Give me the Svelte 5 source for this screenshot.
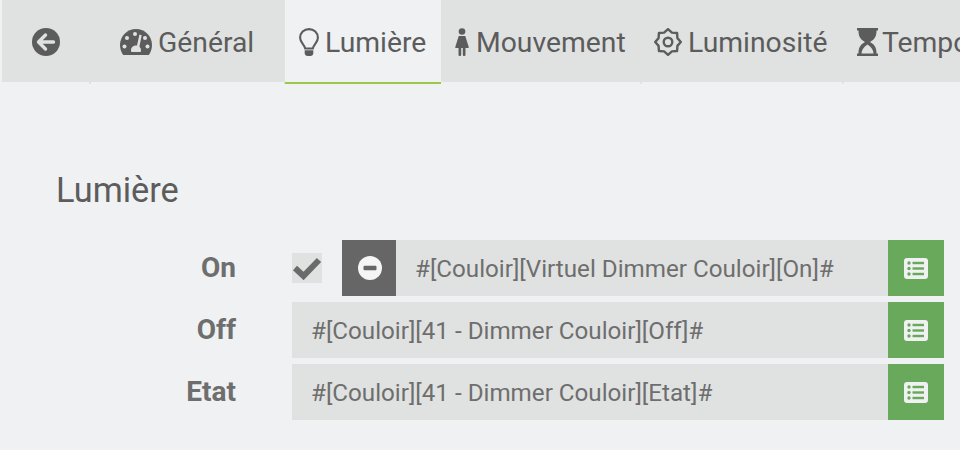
<script>
	const tabs = [
		{ id: "general", label: "Général", width: 195, pad: 30, gap: 6 },
		{ id: "light", label: "Lumière", width: 156, pad: 14, gap: 6, active: true },
		{ id: "move", label: "Mouvement", width: 200, pad: 14, gap: 7 },
		{ id: "lum", label: "Luminosité", width: 202, pad: 13, gap: 6 },
		{ id: "time", label: "Temporisation", width: 240, pad: 14, gap: 4 }
	];

	// eight pointed outline of the brightness icon
	const sunPoints = Array.from({ length: 16 }, (_, i) => {
		const r = i % 2 ? 10.2 : 12.8;
		const a = (i * Math.PI) / 8 - Math.PI / 2;
		return `${(14 + r * Math.cos(a)).toFixed(2)},${(14 + r * Math.sin(a)).toFixed(2)}`;
	}).join(" ");
</script>

{#snippet listIcon()}
	<svg class="list-icon" viewBox="0 0 24 21">
		<rect width="24" height="21" rx="3" fill="#f0f1f2" />
		<g fill="#68a95b">
			<circle cx="5" cy="5" r="1.7" />
			<circle cx="5" cy="10.5" r="1.7" />
			<circle cx="5" cy="16" r="1.7" />
			<rect x="8.5" y="3.8" width="11.5" height="2.4" />
			<rect x="8.5" y="9.3" width="11.5" height="2.4" />
			<rect x="8.5" y="14.8" width="11.5" height="2.4" />
		</g>
	</svg>
{/snippet}

{#snippet tabIcon(id)}
	{#if id === "general"}
		<svg class="ico gauge" viewBox="0 0 32 26">
			<path fill="#5c5c5c" d="M16 0C7 0 0 7.200 0 16c0 3.500 1 6.700 2.800 9.400.3.400.7.600 1.200.600h24c.5 0 .9-.2 1.200-.6C31 22.700 32 19.500 32 16 32 7.200 25 0 16 0z" />
			<g fill="#e0e2e1">
				<circle cx="15" cy="5" r="2" />
				<circle cx="7" cy="9" r="2" />
				<circle cx="4.500" cy="17.500" r="2" />
				<circle cx="27.500" cy="17.500" r="2" />
				<circle cx="25" cy="9" r="2" />
				<path d="M19.500 5.500l2.200.7-2.300 11.600c1 .8 1.600 2 1.600 3.400 0 .7-.2 1.300-.4 1.800h-9.200c-.3-.5-.4-1.100-.4-1.800 0-2.700 2.200-4.700 4.800-4.800h1.200z" />
			</g>
		</svg>
	{:else if id === "light"}
		<svg class="ico bulb" viewBox="0 0 20 29">
			<path fill="none" stroke="#5c5c5c" stroke-width="2.100" d="M6.200 20.500C5.500 16.800 1.100 14.500 1.100 9.700 1.100 4.900 5 1.100 10 1.100s8.900 3.800 8.900 8.600c0 4.800-4.400 7.100-5.100 10.800z" />
			<path fill="#5c5c5c" d="M5.700 22.300h8.600v2.900c0 1.400-1.200 2.800-3 2.800H8.700c-1.800 0-3-1.400-3-2.800z" />
		</svg>
	{:else if id === "move"}
		<svg class="ico female" viewBox="0 0 14 28">
			<circle cx="7" cy="3.500" r="3.300" fill="#5c5c5c" />
			<path fill="#5c5c5c" d="M3.700 8h6.600l3.500 11.300c.1.400-.2.700-.6.700H10.500v6.700c0 .7-.6 1.300-1.300 1.300-.8 0-1.400-.6-1.400-1.300V20H6.200v6.700c0 .7-.6 1.300-1.400 1.300-.7 0-1.300-.6-1.300-1.300V20H.8c-.4 0-.7-.3-.6-.7z" />
		</svg>
	{:else if id === "lum"}
		<svg class="ico sun" viewBox="0 0 28 28">
			<polygon fill="none" stroke="#5c5c5c" stroke-width="2.400" stroke-linejoin="round" points={sunPoints} />
			<circle cx="14" cy="14" r="4.300" fill="none" stroke="#5c5c5c" stroke-width="2.400" />
		</svg>
	{:else}
		<svg class="ico glass" viewBox="0 0 21 28">
			<path fill="#5c5c5c" d="M0 0h21v2.500h-1.500c0 5-1 8.500-6.500 11.500 5.500 3 6.500 6.500 6.500 11.500H21V28H0v-2.500h1.500c0-5 1-8.500 6.500-11.500C2.500 11 1.500 7.500 1.500 2.500H0z" />
			<path fill="#e0e2e1" d="M4.500 25.500c.2-3.500 2-6.500 6-9 4 2.500 5.800 5.500 6 9z" />
		</svg>
	{/if}
{/snippet}

<div class="page">
	<nav class="tabs">
		<a class="tab back" href="#back" aria-label="Retour">
			<svg class="ico arrow" viewBox="0 0 28 28">
				<circle cx="14" cy="14" r="14" fill="#5c5c5c" />
				<path fill="none" stroke="#e0e2e1" stroke-width="3.400" stroke-linecap="round" stroke-linejoin="round" d="M13.500 7l-7 7 7 7M7 14h14.500" />
			</svg>
		</a>
		{#each tabs as tab}
			<a class="tab" class:active={tab.active} style="width: {tab.width}px; padding-left: {tab.pad}px; gap: {tab.gap}px" href="#{tab.id}">
				{@render tabIcon(tab.id)}
				<span>{tab.label}</span>
			</a>
		{/each}
	</nav>

	<section class="content">
		<h2>Lumière</h2>
		<div class="rows">
			<div class="row">
				<span class="label">On</span>
				<div class="field">
					<span class="check">
						<svg viewBox="0 0 30 24"><path fill="none" stroke="#6b6b6b" stroke-width="6" d="M3 12l8.500 8L27 4" /></svg>
					</span>
					<span class="invert">
						<svg viewBox="0 0 24 24">
							<circle cx="12" cy="12" r="12" fill="#f5f5f5" />
							<rect x="5.500" y="9.800" width="13" height="4.400" rx="1" fill="#666" />
						</svg>
					</span>
					<span class="value">#[Couloir][Virtuel Dimmer Couloir][On]#</span>
					<span class="btn">{@render listIcon()}</span>
				</div>
			</div>
			<div class="row">
				<span class="label">Off</span>
				<div class="field">
					<span class="value">#[Couloir][41 - Dimmer Couloir][Off]#</span>
					<span class="btn">{@render listIcon()}</span>
				</div>
			</div>
			<div class="row">
				<span class="label">Etat</span>
				<div class="field">
					<span class="value">#[Couloir][41 - Dimmer Couloir][Etat]#</span>
					<span class="btn">{@render listIcon()}</span>
				</div>
			</div>
		</div>
	</section>
</div>

<style>
	:global(body) {
		margin: 0;
		background: #eff1f3;
		font-family: Roboto, "Liberation Sans", sans-serif;
	}

	.page {
		width: 960px;
		height: 450px;
		overflow: hidden;
	}

	.tabs {
		display: flex;
		height: 84px;
		padding-left: 2px;
	}

	.tab {
		position: relative;
		display: flex;
		flex: none;
		align-items: center;
		box-sizing: border-box;
		height: 82px;
		padding-top: 2px;
		background: #e0e2e1;
		color: #5c5c5c;
		font-size: 28.3px;
		text-decoration: none;
		white-space: nowrap;
	}

	.tab span {
		padding-top: 1px;
	}

	.tab::after {
		content: "";
		position: absolute;
		right: -1px;
		bottom: -2px;
		width: 2px;
		height: 2px;
		background: #e0e2e1;
	}

	.back {
		width: 88px;
		padding-left: 30px;
	}

	.active {
		height: 84px;
		background: #eff1f3;
		border-bottom: 2px solid #9bc84b;
	}

	.active::after {
		display: none;
	}

	.ico {
		flex: none;
	}

	.arrow {
		width: 28px;
		height: 28px;
	}

	.gauge {
		width: 32px;
		height: 26px;
	}

	.bulb {
		width: 20px;
		height: 29px;
	}

	.female {
		width: 14px;
		height: 28px;
	}

	.sun {
		width: 28px;
		height: 28px;
	}

	.glass {
		width: 21px;
		height: 28px;
	}

	.content {
		padding: 87px 16px 0 56px;
	}

	h2 {
		margin: 0 0 30px;
		color: #5c5c5c;
		font-size: 34.3px;
		font-weight: 400;
		line-height: 39px;
	}

	.rows {
		display: flex;
		flex-direction: column;
		gap: 6px;
	}

	.row {
		display: flex;
		height: 56px;
		align-items: stretch;
	}

	.label {
		width: 180px;
		margin-right: 56px;
		color: #6e6e6e;
		font-size: 28px;
		font-weight: 700;
		line-height: 56px;
		text-align: right;
	}

	.field {
		display: flex;
		flex: 1;
		align-items: stretch;
	}

	.check {
		display: flex;
		align-items: center;
		justify-content: center;
		align-self: center;
		width: 30px;
		height: 30px;
		margin-right: 20px;
		background: #e0e2e1;
	}

	.check svg {
		width: 30px;
		height: 24px;
	}

	.invert {
		display: flex;
		align-items: center;
		justify-content: center;
		box-sizing: border-box;
		width: 54px;
		padding-left: 2px;
		background: #666;
	}

	.invert svg {
		width: 24px;
		height: 24px;
	}

	.value {
		flex: 1;
		padding-left: 19px;
		background: #e0e2e1;
		color: #6e6e6e;
		font-size: 24.2px;
		line-height: 58px;
		white-space: nowrap;
	}

	.btn {
		display: flex;
		align-items: center;
		justify-content: center;
		width: 56px;
		background: #68a95b;
	}

	.list-icon {
		width: 24px;
		height: 21px;
	}
</style>
